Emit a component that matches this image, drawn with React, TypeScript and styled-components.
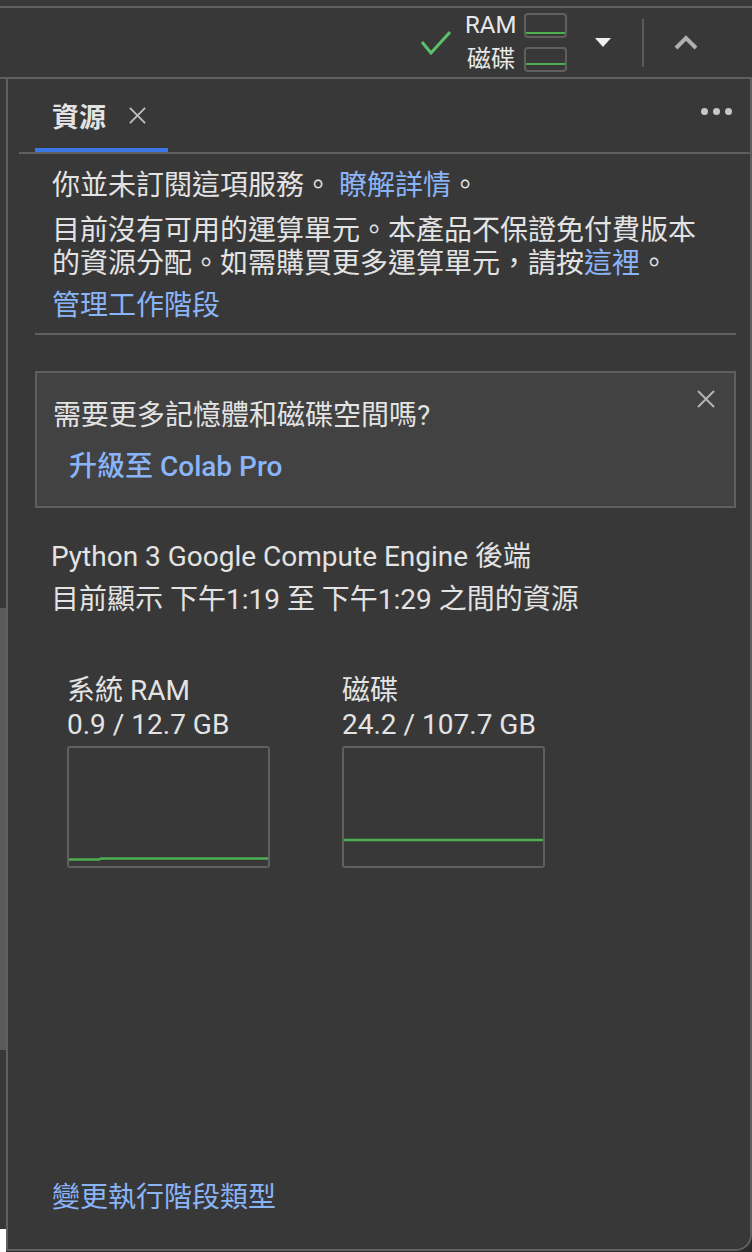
import React from "react";
import styled, { createGlobalStyle } from "styled-components";

const GlobalStyle = createGlobalStyle`
  html, body {
    margin: 0;
    padding: 0;
    background: #383838;
  }
  body {
    font-family: Roboto, "Noto Sans CJK TC", "Noto Sans", sans-serif;
    color: #e3e3e3;
  }
`;

const Page = styled.div`
  width: 752px;
  height: 1252px;
  display: flex;
  flex-direction: column;
  background: #383838;
  overflow: hidden;
`;

const TopStrip = styled.div`
  height: 6px;
  flex-shrink: 0;
  border-bottom: 2px solid #5f5f5f;
`;

const Toolbar = styled.div`
  height: 69px;
  flex-shrink: 0;
  display: flex;
  align-items: center;
  justify-content: flex-end;
  padding-right: 54px;
  border-bottom: 2px solid #5f5f5f;
`;

const Meters = styled.div`
  display: grid;
  grid-template-columns: 50px 43px;
  grid-auto-rows: 25px;
  column-gap: 9px;
  row-gap: 9px;
  align-items: center;
  margin-left: 14px;
`;

const MeterLabel = styled.span`
  font-size: 24px;
  line-height: 25px;
  text-align: right;
  color: #e8e8e8;
`;

const MiniChart = styled.div<{ $level: number }>`
  height: 25px;
  box-sizing: border-box;
  border: 2px solid #5f5f5f;
  border-radius: 4px;
  display: flex;
  flex-direction: column;
  justify-content: flex-end;
  padding-bottom: ${(p) => p.$level}px;

  &::after {
    content: "";
    display: block;
    height: 2px;
    background: #4caf50;
  }
`;

const ToolIcon = styled.span<{ $ml: number }>`
  display: flex;
  align-items: center;
  margin-left: ${(p) => p.$ml}px;
`;

const VDivider = styled.div`
  width: 2px;
  height: 48px;
  margin-left: 31px;
  background: #5a5a5a;
`;

const Body = styled.div`
  flex: 1;
  display: flex;
  min-height: 0;
  background: #2a2a2a;
`;

const Rail = styled.div`
  width: 6px;
  flex-shrink: 0;
  display: flex;
  flex-direction: column;
`;

const RailPart = styled.div<{ $h?: number; $color: string }>`
  height: ${(p) => (p.$h ? `${p.$h}px` : "auto")};
  flex: ${(p) => (p.$h ? "none" : 1)};
  background: ${(p) => p.$color};
`;

const Panel = styled.div`
  flex: 1;
  display: flex;
  flex-direction: column;
  background: #383838;
  border-left: 2px solid #5f5f5f;
  border-right: 2px solid #5f5f5f;
  border-bottom: 2px solid #5f5f5f;
  border-bottom-right-radius: 16px;
  margin-bottom: 1px;
`;

const TabHeader = styled.div`
  height: 73px;
  flex-shrink: 0;
  display: flex;
  align-items: stretch;
  margin-left: 11px;
  padding-right: 18px;
  border-bottom: 2px solid #5f5f5f;
`;

const Tab = styled.div`
  display: flex;
  align-items: center;
  gap: 22px;
  box-sizing: border-box;
  margin-left: 16px;
  padding: 3px 21px 0 17px;
  border-bottom: 4px solid #3b78e7;
`;

const TabTitle = styled.span`
  font-size: 27px;
  font-weight: 700;
  color: #e3e3e3;
`;

const IconButton = styled.span`
  display: flex;
  align-items: center;
  justify-content: center;
`;

const Dots = styled.div`
  margin-left: auto;
  align-self: center;
  margin-bottom: 9px;
  display: flex;
  gap: 5px;
`;

const Dot = styled.span`
  width: 7px;
  height: 7px;
  border-radius: 50%;
  background: #c8c8c8;
`;

const Content = styled.div`
  flex: 1;
  display: flex;
  flex-direction: column;
  padding: 15px 14px 0 27px;
`;

const Para = styled.p<{ $mt?: number }>`
  margin: ${(p) => p.$mt ?? 0}px 0 0;
  padding: 0 17px;
  font-size: 28px;
  line-height: 33px;
`;

const Link = styled.a`
  color: #8ab4f8;
  text-decoration: none;
  cursor: pointer;
`;

const Divider = styled.hr`
  margin: 11px 0 0;
  border: none;
  height: 2px;
  background: #5f5f5f;
`;

const Card = styled.div`
  margin-top: 36px;
  border: 2px solid #5f5f5f;
  background: #424242;
  padding: 26px 18px 18px 16px;
`;

const CardHead = styled.div`
  display: flex;
  align-items: flex-start;
  justify-content: space-between;
`;

const CardTitle = styled.div`
  font-size: 28px;
  line-height: 33px;
`;

const CardClose = styled(IconButton)`
  margin-top: -10px;
`;

const UpgradeButton = styled.button`
  margin-top: 8px;
  height: 48px;
  padding: 0 16px;
  border: none;
  background: transparent;
  color: #8ab4f8;
  font-family: inherit;
  font-size: 28px;
  font-weight: 500;
  text-align: left;
  align-self: flex-start;
  cursor: pointer;
`;

const InfoLine = styled.div<{ $mt?: number }>`
  margin-top: ${(p) => p.$mt ?? 0}px;
  padding-left: 16px;
  font-size: 28px;
  line-height: 43px;
`;

const Charts = styled.div`
  display: flex;
  gap: 72px;
  margin-top: 53px;
  padding-left: 32px;
`;

const ChartCol = styled.div`
  width: 203px;
  display: flex;
  flex-direction: column;
`;

const ChartLabel = styled.div`
  font-size: 28px;
  line-height: 34px;
  white-space: nowrap;
`;

const ChartBox = styled.div`
  margin-top: 4px;
  height: 122px;
  box-sizing: border-box;
  border: 2px solid #5f5f5f;
  border-radius: 3px;

  svg {
    display: block;
  }
`;

const Footer = styled.div`
  margin-top: auto;
  padding: 0 0 35px 17px;
  font-size: 28px;
  line-height: 33px;
`;

const CloseIcon = ({ size, color }: { size: number; color: string }) => (
  <svg width={size} height={size} viewBox="0 0 20 20">
    <path d="M2 2 L18 18 M18 2 L2 18" stroke={color} strokeWidth="2" fill="none" />
  </svg>
);

const charts = [
  { label: "系統 RAM", value: "0.9 / 12.7 GB", points: "0,111.5 30,111.5 32,110.5 199,110.5" },
  { label: "磁碟", value: "24.2 / 107.7 GB", points: "0,92 199,92" },
];

const App = () => {
  return (
    <>
      <GlobalStyle />
      <Page>
        <TopStrip />
        <Toolbar>
          <ToolIcon $ml={0}>
            <svg width="30" height="24" viewBox="0 0 30 24">
              <polyline points="1,11 10,22 29,1" stroke="#5bc06a" strokeWidth="3" fill="none" />
            </svg>
          </ToolIcon>
          <Meters>
            <MeterLabel>RAM</MeterLabel>
            <MiniChart $level={2} />
            <MeterLabel>磁碟</MeterLabel>
            <MiniChart $level={5} />
          </Meters>
          <ToolIcon $ml={28}>
            <svg width="16" height="9" viewBox="0 0 16 9">
              <polygon points="0,0 16,0 8,9" fill="#f0f0f0" />
            </svg>
          </ToolIcon>
          <VDivider />
          <ToolIcon $ml={30}>
            <svg width="24" height="15" viewBox="0 0 24 15">
              <polyline points="2,13 12,3 22,13" stroke="#b0b0b0" strokeWidth="4" fill="none" />
            </svg>
          </ToolIcon>
        </Toolbar>
        <Body>
          <Rail>
            <RailPart $h={529} $color="#383838" />
            <RailPart $h={442} $color="#5a5a5a" />
            <RailPart $h={179} $color="#383838" />
            <RailPart $color="#ffffff" />
          </Rail>
          <Panel>
            <TabHeader>
              <Tab>
                <TabTitle>資源</TabTitle>
                <IconButton>
                  <CloseIcon size={19} color="#bdbdbd" />
                </IconButton>
              </Tab>
              <Dots>
                <Dot />
                <Dot />
                <Dot />
              </Dots>
            </TabHeader>
            <Content>
              <Para>
                你並未訂閱這項服務。 <Link>瞭解詳情</Link>。
              </Para>
              <Para $mt={12}>
                目前沒有可用的運算單元。本產品不保證免付費版本的資源分配。如需購買更多運算單元，請按
                <Link>這裡</Link>。
              </Para>
              <Para $mt={9}>
                <Link>管理工作階段</Link>
              </Para>
              <Divider />
              <Card>
                <CardHead>
                  <CardTitle>需要更多記憶體和磁碟空間嗎?</CardTitle>
                  <CardClose>
                    <CloseIcon size={20} color="#b5b5b5" />
                  </CardClose>
                </CardHead>
                <UpgradeButton>升級至 Colab Pro</UpgradeButton>
              </Card>
              <InfoLine $mt={27}>Python 3 Google Compute Engine 後端</InfoLine>
              <InfoLine>目前顯示 下午1:19 至 下午1:29 之間的資源</InfoLine>
              <Charts>
                {charts.map((c) => (
                  <ChartCol key={c.label}>
                    <ChartLabel>{c.label}</ChartLabel>
                    <ChartLabel>{c.value}</ChartLabel>
                    <ChartBox>
                      <svg width="199" height="118" viewBox="0 0 199 118">
                        <polyline points={c.points} stroke="#4caf50" strokeWidth="2.5" fill="none" />
                      </svg>
                    </ChartBox>
                  </ChartCol>
                ))}
              </Charts>
              <Footer>
                <Link>變更執行階段類型</Link>
              </Footer>
            </Content>
          </Panel>
        </Body>
      </Page>
    </>
  );
};

export default App;
